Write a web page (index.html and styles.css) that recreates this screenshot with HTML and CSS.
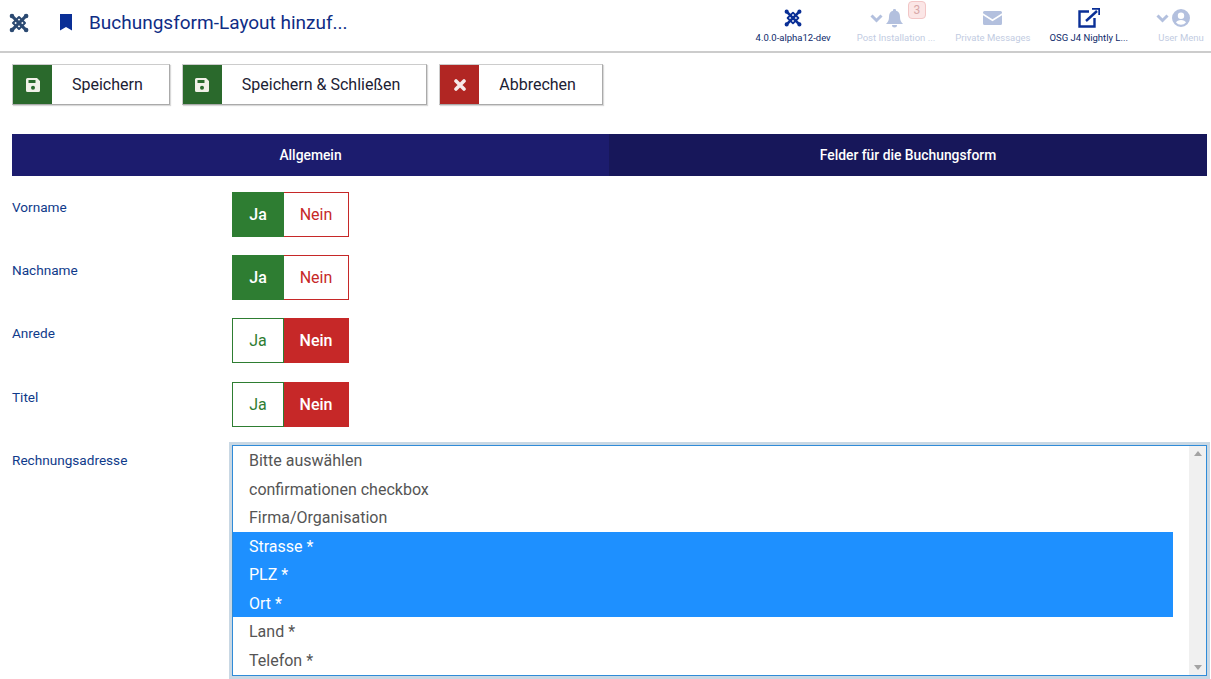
FILE: index.html
```html
<!DOCTYPE html>
<html lang="de">
  <head>
    <meta charset="UTF-8" />
    <title>Buchungsform-Layout hinzufügen</title>
    <link rel="stylesheet" href="styles.css">
  </head>
  <body>
    <header class="topbar">
      <svg class="logo" width="20" height="20" viewBox="0 0 24 24" fill="none" stroke="#2c4a72" stroke-linecap="round" stroke-linejoin="round">
        <path d="M3.500 3.500 20.500 20.500M20.500 3.500 3.500 20.500" stroke-width="3.600"/>
        <path d="M12 4.800 19.200 12 12 19.200 4.800 12Z" stroke-width="2.400"/>
        <path d="M3.500 3.500h.1M20.500 3.500h.1M3.500 20.500h.1M20.500 20.500h.1" stroke-width="5.400"/>
      </svg>
      <svg class="bookmark" width="14" height="17" viewBox="0 0 14 17"><path d="M1 0h12v16.500L7 13 1 16.500Z" fill="#0a2f96"/></svg>
      <h1 class="page-title">Buchungsform-Layout hinzuf...</h1>
      <nav class="status-nav">
        <a class="status-item version">
          <span class="status-icons">
            <svg width="18" height="18" viewBox="0 0 24 24" fill="none" stroke="#0a2f96" stroke-linecap="round" stroke-linejoin="round">
              <path d="M3.500 3.500 20.500 20.500M20.500 3.500 3.500 20.500" stroke-width="3.600"/>
              <path d="M12 4.800 19.200 12 12 19.200 4.800 12Z" stroke-width="2.400"/>
              <path d="M3.500 3.500h.1M20.500 3.500h.1M3.500 20.500h.1M20.500 20.500h.1" stroke-width="5.400"/>
            </svg>
          </span>
          4.0.0-alpha12-dev
        </a>
        <a class="status-item muted post-install">
          <span class="status-icons">
            <svg class="chevron" width="13" height="9" viewBox="0 0 13 9" fill="none"><path d="M1.500 1.500 6.500 6.500 11.500 1.500" stroke="#b3c0de" stroke-width="3"/></svg>
            <svg width="17" height="19" viewBox="0 0 17 19"><path d="M8.500 0a1.500 1.500 0 0 1 1.500 1.800C13 2.500 14 5 14 8c0 3.500 1 5 3 7H0c2-2 3-3.500 3-7 0-3 1-5.500 4-6.200A1.500 1.500 0 0 1 8.500 0ZM6 16h5a2.500 2.500 0 0 1-5 0Z" fill="#b3c0de"/></svg>
            <span class="badge">3</span>
          </span>
          Post Installation ...
        </a>
        <a class="status-item muted">
          <span class="status-icons">
            <svg width="19" height="14" viewBox="0 0 19 14"><path d="M1.500 0h16A1.500 1.500 0 0 1 19 1.500v.7l-9.500 6-9.500-6v-.7A1.500 1.500 0 0 1 1.500 0ZM0 4.300l9.500 6 9.500-6v8.200a1.500 1.500 0 0 1-1.500 1.500h-16A1.500 1.500 0 0 1 0 12.500Z" fill="#b3c0de"/></svg>
          </span>
          Private Messages
        </a>
        <a class="status-item site">
          <span class="status-icons">
            <svg width="22" height="20" viewBox="0 0 22 20" fill="none" stroke="#0a2f96" stroke-width="2.400">
              <path d="M11 3.500H1.500V18.500H16.500V10"/>
              <path d="M8 13 19 3"/>
              <path d="M14 .5h7.500V7" fill="none" stroke-width="2.400"/>
            </svg>
          </span>
          OSG J4 Nightly L...
        </a>
        <a class="status-item muted user-menu">
          <span class="status-icons">
            <svg class="chevron" width="13" height="9" viewBox="0 0 13 9" fill="none"><path d="M1.500 1.500 6.500 6.500 11.500 1.500" stroke="#b3c0de" stroke-width="3"/></svg>
            <svg width="18" height="18" viewBox="0 0 18 18"><path d="M9 0a9 9 0 1 1 0 18A9 9 0 0 1 9 0Zm0 3.500a3.200 3.200 0 1 0 0 6.400 3.200 3.200 0 0 0 0-6.400ZM9 11c-2.500 0-4.300 1-5 2.500a6.800 6.800 0 0 0 10 0C13.300 12 11.500 11 9 11Z" fill="#b3c0de" fill-rule="evenodd"/></svg>
          </span>
          User Menu
        </a>
      </nav>
    </header>

    <main class="content">
      <div class="toolbar">
        <button class="tool-btn">
          <span class="tool-icon save">
            <svg width="14" height="14" viewBox="0 0 14 14"><path d="M1.500 0H11l3 3v9.500a1.500 1.500 0 0 1-1.500 1.500h-11A1.500 1.500 0 0 1 0 12.500v-11A1.500 1.500 0 0 1 1.500 0Zm1 2v3h7V2ZM7 7.800a2 2 0 1 0 0 4 2 2 0 0 0 0-4Z" fill="#f1f1e8" fill-rule="evenodd"/></svg>
          </span>
          <span class="tool-label">Speichern</span>
        </button>
        <button class="tool-btn">
          <span class="tool-icon save">
            <svg width="14" height="14" viewBox="0 0 14 14"><path d="M1.500 0H11l3 3v9.500a1.500 1.500 0 0 1-1.500 1.500h-11A1.500 1.500 0 0 1 0 12.500v-11A1.500 1.500 0 0 1 1.500 0Zm1 2v3h7V2ZM7 7.800a2 2 0 1 0 0 4 2 2 0 0 0 0-4Z" fill="#f1f1e8" fill-rule="evenodd"/></svg>
          </span>
          <span class="tool-label">Speichern &amp; Schließen</span>
        </button>
        <button class="tool-btn">
          <span class="tool-icon cancel">
            <svg width="12" height="12" viewBox="0 0 12 12"><path d="M2 2 10 10M10 2 2 10" stroke="#f7e9e9" stroke-width="3.600" stroke-linecap="round"/></svg>
          </span>
          <span class="tool-label">Abbrechen</span>
        </button>
      </div>

      <div class="tabs">
        <div class="tab active">Allgemein</div>
        <div class="tab">Felder für die Buchungsform</div>
      </div>

      <div class="form-row">
        <label class="field-label">Vorname</label>
        <div class="toggle">
          <span class="toggle-yes on">Ja</span><span class="toggle-no">Nein</span>
        </div>
      </div>
      <div class="form-row">
        <label class="field-label">Nachname</label>
        <div class="toggle">
          <span class="toggle-yes on">Ja</span><span class="toggle-no">Nein</span>
        </div>
      </div>
      <div class="form-row">
        <label class="field-label">Anrede</label>
        <div class="toggle">
          <span class="toggle-yes">Ja</span><span class="toggle-no on">Nein</span>
        </div>
      </div>
      <div class="form-row">
        <label class="field-label">Titel</label>
        <div class="toggle">
          <span class="toggle-yes">Ja</span><span class="toggle-no on">Nein</span>
        </div>
      </div>
      <div class="form-row">
        <label class="field-label">Rechnungsadresse</label>
        <div class="listbox">
          <ul class="options">
            <li>Bitte auswählen</li>
            <li>confirmationen checkbox</li>
            <li>Firma/Organisation</li>
            <li class="selected">Strasse *</li>
            <li class="selected">PLZ *</li>
            <li class="selected">Ort *</li>
            <li>Land *</li>
            <li>Telefon *</li>
          </ul>
          <div class="scrollbar">
            <span class="arrow-up"></span>
            <span class="arrow-down"></span>
          </div>
        </div>
      </div>
    </main>
  </body>
</html>
```

FILE: styles.css
```css
* { box-sizing: border-box; }
body {
  margin: 0;
  height: 679px;
  overflow: hidden;
  background: #fff;
  font-family: Roboto, "Liberation Sans", sans-serif;
  color: #1c2133;
}

/* Top bar */
.topbar {
  display: flex;
  align-items: center;
  height: 53px;
  padding: 0 5px 6px 9px;
  border-bottom: 2px solid #ccc;
}
.logo { flex: none; }
.bookmark { flex: none; margin-left: 30px; }
.page-title {
  margin: 0 0 0 16px;
  font-size: 19px;
  font-weight: 400;
  color: #0f2d85;
  white-space: nowrap;
}
.status-nav {
  display: flex;
  align-self: flex-start;
  margin-left: auto;
  align-items: flex-start;
  padding-top: 6px;
}
.status-item {
  display: flex;
  flex-direction: column;
  align-items: center;
  font-size: 9.500px;
  color: #0e2a6b;
  white-space: nowrap;
}
.status-item.muted { color: #c2cce2; }
.status-icons {
  display: flex;
  align-items: center;
  gap: 3px;
  height: 24px;
  margin-bottom: 2px;
}
.post-install { margin-left: 26px; }
.post-install .status-icons { margin-left: 4px; }
.muted + .muted { margin-left: 20px; }
.site { margin-left: 19px; }
.user-menu { margin-left: 28px; }
.user-menu .status-icons { margin-right: 16px; }
.badge {
  position: relative;
  top: -8px;
  width: 18px;
  height: 18px;
  margin-left: 2px;
  border: 1px solid #f2c6c6;
  border-radius: 4px;
  background: #fbe6e6;
  color: #d8a8a8;
  font-size: 12px;
  line-height: 16px;
  text-align: center;
}

/* Page content */
.content { padding: 11px 4px 0 12px; }
.toolbar { display: flex; gap: 12px; margin-bottom: 30px; }
.tool-btn {
  display: flex;
  align-items: stretch;
  height: 41px;
  padding: 0;
  border: 1px solid #ccc;
  border-right-color: #aaa;
  border-bottom-color: #aaa;
  background: #fff;
  font-family: inherit;
  font-size: 16px;
  color: #1c2133;
  box-shadow: 1px 1px 1px rgba(0, 0, 0, 0.15);
}
.tool-icon {
  display: flex;
  align-items: center;
  justify-content: center;
  width: 39px;
}
.tool-icon.save { background: #2a692c; }
.tool-icon.cancel { background: #b12623; }
.tool-label { align-self: center; padding: 0 26px 0 20px; }

.tabs { display: flex; height: 42px; margin-bottom: 16px; margin-top: -1px; }
.tab {
  flex: 1;
  display: flex;
  align-items: center;
  justify-content: center;
  background: #17175a;
  color: #fff;
  font-size: 13.850px;
  font-weight: 500;
}
.tab.active { flex: 0 0 597px; background: #1c1c6e; }

/* Form rows */
.form-row { display: flex; margin-bottom: 18.200px; }
.field-label {
  flex: none;
  width: 220px;
  padding-top: 7px;
  font-size: 13.600px;
  color: #0f3a8a;
}
.toggle { display: flex; height: 45px; font-size: 16px; }
.toggle-yes, .toggle-no {
  display: flex;
  align-items: center;
  justify-content: center;
  border: 1px solid;
}
.toggle-yes { width: 52px; color: #2e7d32; border-color: #2e7d32; }
.toggle-no { width: 65px; color: #c62828; border-color: #c62828; }
.toggle-yes + .toggle-no { border-left: 0; }
.toggle-yes.on { background: #2e7d32; color: #fff; font-weight: 500; }
.toggle-no.on { background: #c62828; color: #fff; font-weight: 500; }

/* Multi select */
.listbox {
  flex: 1;
  display: flex;
  height: 231px;
  border: 1.500px solid #2f8bd8;
  box-shadow: 0 0 0 3px #c9d8e4;
  font-size: 16px;
  color: #555;
}
.options { flex: 1; margin: 0; padding: 0.500px 16px 0 0; list-style: none; }
.options li {
  height: 28.500px;
  padding-left: 16px;
  line-height: 29px;
}
.options li.selected { background: #1e90ff; color: #fff; }
.scrollbar {
  flex: none;
  display: flex;
  flex-direction: column;
  justify-content: space-between;
  align-items: center;
  width: 17px;
  padding: 5px 0;
  background: #f0f0f0;
}
.arrow-up, .arrow-down {
  width: 0;
  height: 0;
  border-left: 4px solid transparent;
  border-right: 4px solid transparent;
}
.arrow-up { border-bottom: 5px solid #a3a3a3; }
.arrow-down { border-top: 5px solid #a3a3a3; }
```
